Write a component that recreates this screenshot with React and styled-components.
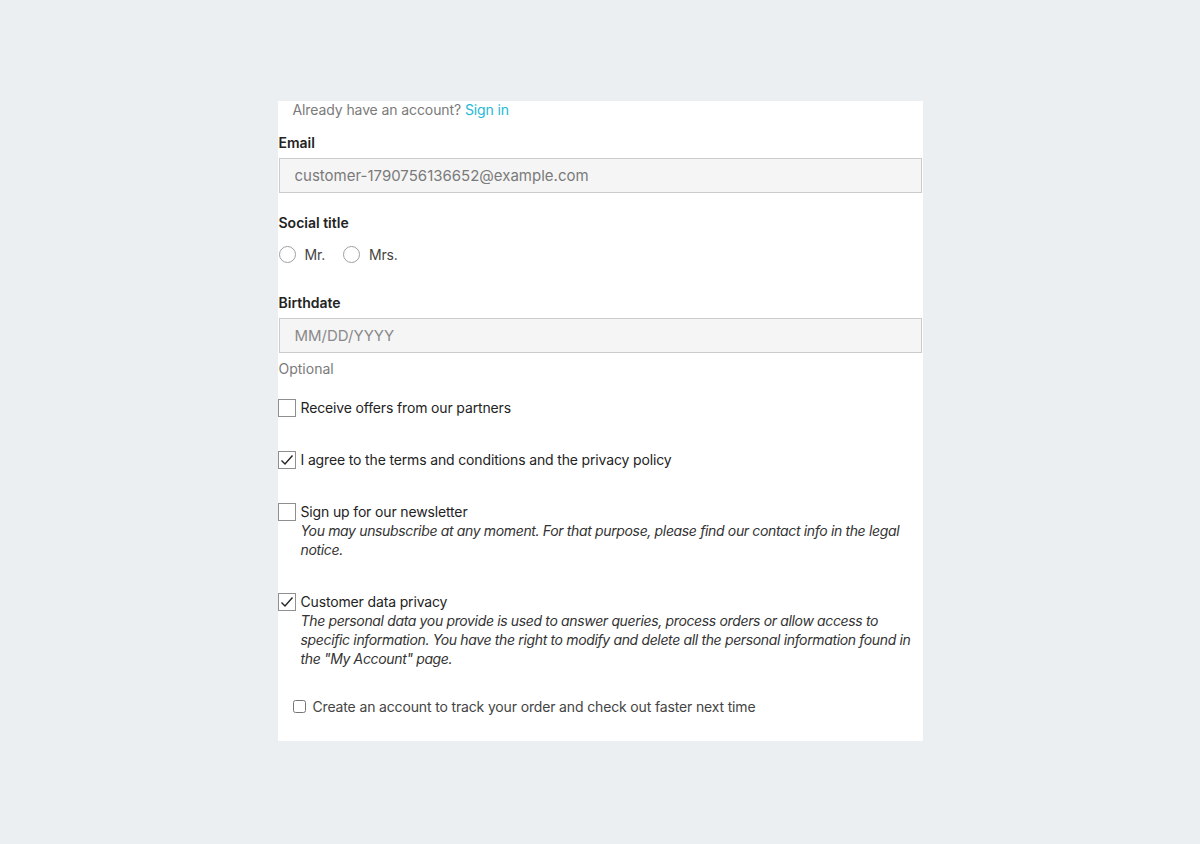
import React from "react";
import styled, { createGlobalStyle } from "styled-components";

const GlobalStyle = createGlobalStyle`
  body {
    margin: 0;
    background: #eceff2;
    font-family: Inter, "Noto Sans", "Liberation Sans", sans-serif;
    color: #232323;
  }
`;

const Page = styled.div`
  min-height: 844px;
  padding-top: 101px;
  box-sizing: border-box;
`;

const Panel = styled.form`
  width: 645px;
  margin: 0 auto;
  background: #fff;
  padding: 0 1px 25px;
  box-sizing: border-box;
`;

const Intro = styled.p`
  margin: 0;
  padding-left: 14px;
  font-size: 14px;
  letter-spacing: -0.1px;
  line-height: 17px;
  color: #7a7a7a;
`;

const Link = styled.a`
  color: #24b9d7;
  text-decoration: none;
`;

const Group = styled.div`
  margin-top: ${(p) => p.$top}px;
`;

const Label = styled.label`
  display: block;
  font-size: 14px;
  font-weight: 600;
  line-height: 20px;
  color: #232323;
  margin-bottom: 5px;
`;

const Input = styled.input`
  display: block;
  width: 100%;
  height: 35px;
  box-sizing: border-box;
  padding: 0 15px;
  background: #f5f5f5;
  border: 1px solid #cbcbcb;
  font-family: inherit;
  font-size: 15px;
  color: #7a7a7a;
  outline: none;
  &::placeholder {
    color: #8a8a8a;
  }
`;

const RadioRow = styled.div`
  display: flex;
  align-items: center;
  gap: 18px;
  margin-top: 11px;
  height: 20px;
`;

const RadioLabel = styled.label`
  display: flex;
  align-items: center;
  gap: 9px;
  font-size: 14px;
  letter-spacing: -0.2px;
  color: #444;
`;

const RadioDot = styled.span`
  width: 17px;
  height: 17px;
  border-radius: 50%;
  border: 1px solid #a0a0a0;
  box-sizing: border-box;
  background: #fff;
`;

const Help = styled.div`
  margin-top: 7px;
  font-size: 14px;
  line-height: 18px;
  color: #7a7a7a;
`;

const CheckRow = styled.div`
  display: flex;
  align-items: flex-start;
  gap: 5px;
  margin-top: ${(p) => p.$top}px;
  font-size: 14px;
  letter-spacing: -0.15px;
  line-height: 19px;
  color: #232323;
`;

const Box = styled.span`
  flex: none;
  width: 18px;
  height: 18px;
  margin: 1px 0 0 -1px;
  border: 1px solid #8f8f8f;
  box-sizing: border-box;
  background: #fff;
  display: flex;
  align-items: center;
  justify-content: center;
`;

const CheckText = styled.div`
  display: flex;
  flex-direction: column;
`;

const Note = styled.em`
  font-style: italic;
  letter-spacing: -0.35px;
  color: #333;
`;

const SmallRow = styled.label`
  display: flex;
  align-items: center;
  gap: 7px;
  margin-top: 29px;
  padding-left: 14px;
  font-size: 14px;
  letter-spacing: -0.15px;
  line-height: 19px;
  color: #444;
`;

const NativeBox = styled.input`
  width: 13px;
  height: 13px;
  margin: 0;
`;

const Check = () => (
  <svg width="14" height="12" viewBox="0 0 14 12">
    <path d="M1.5 6.5 L5 10 L12.5 1.5" fill="none" stroke="#232323" strokeWidth="1.4" />
  </svg>
);

const CheckItem = ({ top, checked, title, note }) => (
  <CheckRow $top={top}>
    <Box>{checked && <Check />}</Box>
    <CheckText>
      <span>{title}</span>
      {note && <Note>{note}</Note>}
    </CheckText>
  </CheckRow>
);

export default function App() {
  return (
    <>
      <GlobalStyle />
      <Page>
        <Panel onSubmit={(e) => e.preventDefault()}>
          <Intro>
            Already have an account? <Link href="#">Sign in</Link>
          </Intro>

          <Group $top={15}>
            <Label>Email</Label>
            <Input defaultValue="customer-1790756136652@example.com" readOnly />
          </Group>

          <Group $top={20}>
            <Label>Social title</Label>
            <RadioRow>
              <RadioLabel>
                <RadioDot /> Mr.
              </RadioLabel>
              <RadioLabel>
                <RadioDot /> Mrs.
              </RadioLabel>
            </RadioRow>
          </Group>

          <Group $top={29}>
            <Label>Birthdate</Label>
            <Input placeholder="MM/DD/YYYY" />
            <Help>Optional</Help>
          </Group>

          <CheckItem top={20} title="Receive offers from our partners" />
          <CheckItem top={33} checked title="I agree to the terms and conditions and the privacy policy" />
          <CheckItem
            top={33}
            title="Sign up for our newsletter"
            note="You may unsubscribe at any moment. For that purpose, please find our contact info in the legal notice."
          />
          <CheckItem
            top={33}
            checked
            title="Customer data privacy"
            note={'The personal data you provide is used to answer queries, process orders or allow access to specific information. You have the right to modify and delete all the personal information found in the "My Account" page.'}
          />

          <SmallRow>
            <NativeBox type="checkbox" />
            Create an account to track your order and check out faster next time
          </SmallRow>
        </Panel>
      </Page>
    </>
  );
}
